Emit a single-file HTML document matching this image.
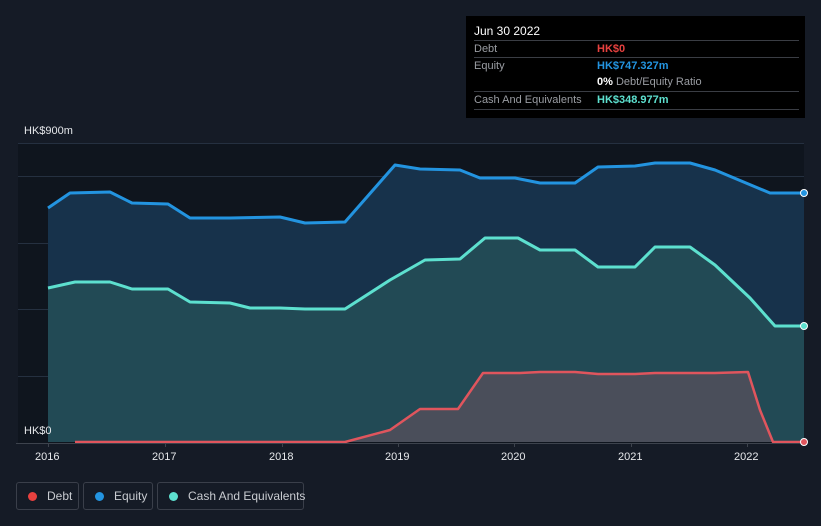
<!DOCTYPE html>
<html><head><style>
body{margin:0;background:#151b26;font-family:"Liberation Sans",sans-serif;}
.wrap{position:relative;width:821px;height:526px;overflow:hidden;background:#151b26}
.tip{position:absolute;left:466px;top:16px;width:339px;height:102px;background:#000;color:#fff;font-size:11px}
.tip .r{position:absolute;left:8px;right:6px;height:17px;border-top:1px solid #3a3d44;line-height:17px;color:#9a9da3}
.tip .v{position:absolute;left:123px;font-weight:bold}
.leg{position:absolute;top:482px;height:28px;border:1px solid #3a3f4a;border-radius:3px;color:#c8cbd0;font-size:12px;line-height:26px;box-sizing:border-box;white-space:nowrap}
.leg i{display:inline-block;width:9px;height:9px;border-radius:50%;margin:0 10px 0 11px;vertical-align:-1px}
.ax{position:absolute;top:451px;color:#e6e8eb;font-size:11px}
</style></head><body><div class="wrap">
<svg width="821" height="526" style="position:absolute;left:0;top:0">
<rect x="18" y="143" width="786" height="300" fill="#0f151e"/>
<g stroke="#253040" stroke-width="1">
<line x1="18" y1="143.5" x2="804" y2="143.5"/><line x1="18" y1="176.5" x2="804" y2="176.5"/>
<line x1="18" y1="243.5" x2="804" y2="243.5"/><line x1="18" y1="309.5" x2="804" y2="309.5"/>
<line x1="18" y1="376.5" x2="804" y2="376.5"/></g>
<polygon fill="#17324b" points="48,208 70,193 110,192 132,203 168,204 190,218 230,218 280,217 305,223 345,222 395,165 420,169 460,170 480,178 515,178 540,183 575,183 598,167 635,166 655,163 690,163 715,170 770,193 804,193 804,442 48,442"/>
<polygon fill="#224a55" points="48,288 75,282 110,282 132,289 168,289 190,302 230,303 250,308 280,308 305,309 345,309 390,280 425,260 460,259 485,238 518,238 540,250 575,250 598,267 635,267 655,247 690,247 715,265 750,298 775,326 804,326 804,442 48,442"/>
<polygon fill="#4a4e5a" points="75,442 345,442 390,430 420,409 458,409 483,373 520,373 540,372 575,372 598,374 635,374 655,373 715,373 748,372 760,410 773,442"/>
<polyline fill="none" stroke="#2394e0" stroke-width="3" stroke-linejoin="round" points="48,208 70,193 110,192 132,203 168,204 190,218 230,218 280,217 305,223 345,222 395,165 420,169 460,170 480,178 515,178 540,183 575,183 598,167 635,166 655,163 690,163 715,170 770,193 804,193"/>
<polyline fill="none" stroke="#5de0cf" stroke-width="3" stroke-linejoin="round" points="48,288 75,282 110,282 132,289 168,289 190,302 230,303 250,308 280,308 305,309 345,309 390,280 425,260 460,259 485,238 518,238 540,250 575,250 598,267 635,267 655,247 690,247 715,265 750,298 775,326 804,326"/>
<polyline fill="none" stroke="#e0555d" stroke-width="2.5" stroke-linejoin="round" points="75,442 345,442 390,430 420,409 458,409 483,373 520,373 540,372 575,372 598,374 635,374 655,373 715,373 748,372 760,410 773,442 804,442"/>
<line x1="16" y1="443.5" x2="804" y2="443.5" stroke="#3d434d"/>
<g stroke="#3d434d"><line x1="48.5" y1="443" x2="48.5" y2="447"/><line x1="165.5" y1="443" x2="165.5" y2="447"/><line x1="282.5" y1="443" x2="282.5" y2="447"/><line x1="398.5" y1="443" x2="398.5" y2="447"/><line x1="514.5" y1="443" x2="514.5" y2="447"/><line x1="631.5" y1="443" x2="631.5" y2="447"/><line x1="747.5" y1="443" x2="747.5" y2="447"/></g>
<circle cx="804" cy="193" r="3.5" fill="#2394e0" stroke="#fff" stroke-width="1"/>
<circle cx="804" cy="326" r="3.5" fill="#5de0cf" stroke="#fff" stroke-width="1"/>
<circle cx="804" cy="442" r="3.5" fill="#e0555d" stroke="#fff" stroke-width="1"/>
</svg>
<div style="position:absolute;left:24px;top:125px;color:#e6e8eb;font-size:11px">HK$900m</div>
<div style="position:absolute;left:24px;top:425px;color:#e6e8eb;font-size:11px">HK$0</div>
<div class="ax" style="left:35px">2016</div><div class="ax" style="left:152px">2017</div><div class="ax" style="left:269px">2018</div><div class="ax" style="left:385px">2019</div><div class="ax" style="left:501px">2020</div><div class="ax" style="left:618px">2021</div><div class="ax" style="left:734px">2022</div>
<div class="tip">
<div style="position:absolute;left:8px;top:8px;font-size:12px">Jun 30 2022</div>
<div class="r" style="top:24px">Debt<span class="v" style="color:#e8413f">HK$0</span></div>
<div class="r" style="top:41px">Equity<span class="v" style="color:#2394e0">HK$747.327m</span></div>
<div class="r" style="top:58px;border-top:none"><span class="v" style="color:#fff">0% <span style="font-weight:normal;color:#9a9da3">Debt/Equity Ratio</span></span></div>
<div class="r" style="top:75px">Cash And Equivalents<span class="v" style="color:#5de0cf">HK$348.977m</span></div>
<div class="r" style="top:93px;height:0"></div>
</div>
<div class="leg" style="left:16px;width:63px"><i style="background:#e8413f"></i>Debt</div>
<div class="leg" style="left:83px;width:70px"><i style="background:#2394e0"></i>Equity</div>
<div class="leg" style="left:157px;width:147px"><i style="background:#5de0cf"></i>Cash And Equivalents</div>
</div></body></html>
